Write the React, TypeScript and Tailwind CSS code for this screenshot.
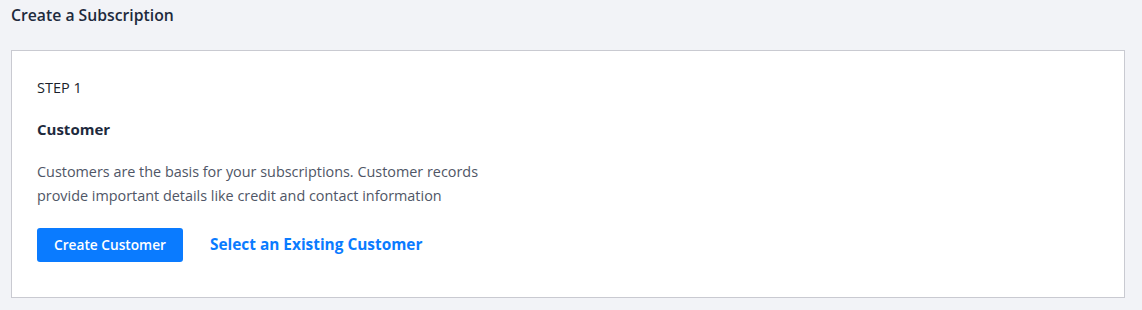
export default function App() {
  return (
    <div className="min-h-[310px] bg-[#f2f3f7] px-[11px] pt-[5px] font-['Open_Sans','Liberation_Sans',sans-serif]">
      <h1 className="text-[15.75px] leading-[20px] font-semibold text-[#1e2a3d]">Create a Subscription</h1>
      <div className="mt-[25px] mr-[6px] border border-[#c9cad1] bg-white px-[25px] pt-[25px] pb-[35px]">
        <div className="text-[14.5px] leading-[24px] text-[#1a1f2b]">STEP 1</div>
        <h2 className="mt-[17px] text-[15px] leading-[24px] font-bold text-[#1e2a3d]">Customer</h2>
        <p className="mt-[19px] max-w-[470px] text-[14.4px] leading-[24px] text-[#4f5666]">
          Customers are the basis for your subscriptions. Customer records provide important details like credit and
          contact information
        </p>
        <div className="mt-[20px] flex items-center gap-[27px]">
          <button className="h-[34px] w-[146px] rounded-[3px] bg-[#0a7bff] text-[13.7px] font-semibold text-white">
            Create Customer
          </button>
          <a href="#" className="text-[15.4px] font-bold text-[#0a7bff]">
            Select an Existing Customer
          </a>
        </div>
      </div>
    </div>
  );
}
